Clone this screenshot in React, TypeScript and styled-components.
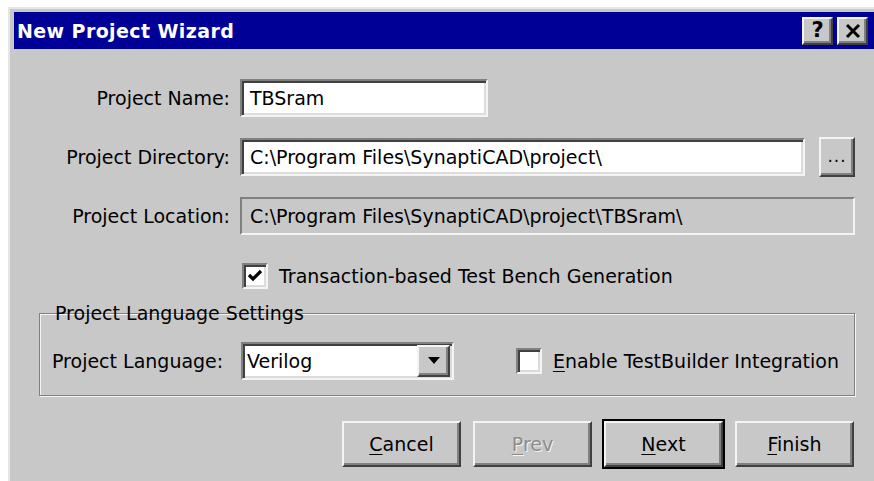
import React from "react";
import styled, { createGlobalStyle } from "styled-components";

const FONT = `"DejaVu Sans", "Liberation Sans", sans-serif`;
const FACE = "#c8c8c8";

const GlobalStyle = createGlobalStyle`
  html, body { margin: 0; padding: 0; background: #ffffff; overflow: hidden; }
  body { font-family: ${FONT}; }
  * { box-sizing: border-box; }
`;

const Window = styled.div`
  margin: 7px 0 0 8px;
  height: calc(100vh - 7px);
  border-top: 2px solid #e6e6e6;
  border-left: 2px solid #e6e6e6;
  background: ${FACE};
  padding: 3px 0 0 4px;
  display: flex;
  flex-direction: column;
  font-family: ${FONT};
  font-size: 19px;
  color: #000;
`;

const TitleBar = styled.div`
  height: 37px;
  background: #000096;
  display: flex;
  align-items: center;
  padding: 0 6px 0 3px;
`;

const Title = styled.div`
  flex: 1;
  color: #fff;
  font-weight: bold;
  font-size: 19px;
  letter-spacing: 0.4px;
`;

const CaptionButton = styled.div`
  width: 31px;
  height: 28px;
  margin-left: 4px;
  background: ${FACE};
  border-top: 2px solid #f4f4f4;
  border-left: 2px solid #f4f4f4;
  border-right: 2px solid #404040;
  border-bottom: 2px solid #404040;
  box-shadow: inset -2px -2px 0 #808080;
  display: flex;
  align-items: center;
  justify-content: center;
`;

const Body = styled.div`
  flex: 1;
  padding: 30px 0 0 0;
  display: flex;
  flex-direction: column;
`;

const FormGrid = styled.div`
  display: grid;
  grid-template-columns: 216px 1fr;
  column-gap: 10px;
  row-gap: 20px;
  align-items: center;
  padding-right: 19px;
`;

const Label = styled.label`
  text-align: right;
  white-space: nowrap;
`;

const FieldRow = styled.div`
  display: flex;
  align-items: center;
  gap: 14px;
`;

const TextField = styled.div<{ $width?: number; $disabled?: boolean }>`
  ${(p) => (p.$width ? `width: ${p.$width}px;` : "flex: 1;")}
  height: 38px;
  background: ${(p) => (p.$disabled ? FACE : "#ffffff")};
  border-top: 2px solid #808080;
  border-left: 2px solid #808080;
  border-right: 2px solid #f4f4f4;
  border-bottom: 2px solid #f4f4f4;
  box-shadow: ${(p) =>
    p.$disabled ? "none" : "inset 2px 2px 0 #404040, inset -2px -2px 0 #dcdcdc"};
  padding: 0 8px;
  display: flex;
  align-items: center;
  white-space: nowrap;
  overflow: hidden;
`;

const BrowseButton = styled.div`
  width: 36px;
  height: 40px;
  background: ${FACE};
  border-top: 2px solid #f4f4f4;
  border-left: 2px solid #f4f4f4;
  border-right: 2px solid #404040;
  border-bottom: 2px solid #404040;
  box-shadow: inset -2px -2px 0 #808080;
  display: flex;
  align-items: flex-end;
  justify-content: center;
  padding-bottom: 9px;
  font-size: 17px;
  letter-spacing: 1px;
`;

const CheckRow = styled.div<{ $indent: number }>`
  display: flex;
  align-items: center;
  gap: 11px;
  padding-left: ${(p) => p.$indent}px;
`;

const CheckBox = styled.div`
  width: 26px;
  height: 26px;
  background: #ffffff;
  border-top: 2px solid #808080;
  border-left: 2px solid #808080;
  border-right: 2px solid #f4f4f4;
  border-bottom: 2px solid #f4f4f4;
  box-shadow: inset 2px 2px 0 #404040, inset -2px -2px 0 #dcdcdc;
  display: flex;
  align-items: center;
  justify-content: center;
`;

const Group = styled.fieldset`
  margin: 14px 19px 0 25px;
  padding: 10px 10px 0 10px;
  height: 93px;
  border: 0;
  box-shadow: inset 1px 1px 0 #808080, inset -1px -1px 0 #808080,
    1px 1px 0 #f4f4f4, inset 2px 2px 0 #f4f4f4;
  display: flex;
  align-items: flex-start;
`;

const Legend = styled.legend`
  padding: 0 4px 0 2px;
  margin-left: 4px;
  line-height: 20px;
`;

const GroupRow = styled.div`
  display: flex;
  align-items: center;
  width: 100%;
  margin-top: 9px;
`;

const GroupLabel = styled.span`
  width: 192px;
  padding-left: 3px;
  white-space: nowrap;
`;

const Select = styled.div`
  width: 213px;
  height: 38px;
  background: #ffffff;
  border-top: 2px solid #808080;
  border-left: 2px solid #808080;
  border-right: 2px solid #f4f4f4;
  border-bottom: 2px solid #f4f4f4;
  box-shadow: inset 2px 2px 0 #404040, inset -2px -2px 0 #dcdcdc;
  display: flex;
  align-items: center;
  padding: 2px 2px 2px 4px;
`;

const SelectValue = styled.span`
  flex: 1;
`;

const DropButton = styled.div`
  width: 33px;
  height: 32px;
  background: ${FACE};
  border-top: 2px solid #f4f4f4;
  border-left: 2px solid #f4f4f4;
  border-right: 2px solid #404040;
  border-bottom: 2px solid #404040;
  box-shadow: inset -2px -2px 0 #808080;
  display: flex;
  align-items: center;
  justify-content: center;
`;

const Spacer = styled.div`
  flex: 1;
`;

const ButtonBar = styled.div`
  display: flex;
  justify-content: flex-end;
  gap: 12px;
  padding: 0 20px 0 0;
  margin-top: 25px;
`;

const PushButton = styled.div<{ $default?: boolean; $disabled?: boolean }>`
  width: 119px;
  height: 46px;
  background: ${FACE};
  border-top: 2px solid #f4f4f4;
  border-left: 2px solid #f4f4f4;
  border-right: 2px solid #404040;
  border-bottom: 2px solid #404040;
  box-shadow: inset -2px -2px 0 #808080
    ${(p) => (p.$default ? ", 0 0 0 2px #000" : "")};
  display: flex;
  align-items: center;
  justify-content: center;
  color: ${(p) => (p.$disabled ? "#8c8c8c" : "#000")};
  text-shadow: ${(p) => (p.$disabled ? "1px 1px 0 #f4f4f4" : "none")};
`;

const Key = styled.span`
  text-decoration: underline;
  text-underline-offset: 3px;
`;

const CheckMark = () => (
  <svg width="16" height="16" viewBox="0 0 16 16">
    <path d="M2 7 L6 11 L14 3" fill="none" stroke="#000" strokeWidth="3.2" />
  </svg>
);

const Arrow = () => (
  <svg width="12" height="8" viewBox="0 0 12 8">
    <path d="M0 0 H12 L6 7 Z" fill="#000" />
  </svg>
);

const HelpGlyph = styled.span`
  font-weight: bold;
  font-size: 21px;
  line-height: 1;
`;

const CloseIcon = () => (
  <svg width="16" height="16" viewBox="0 0 16 16">
    <path d="M2 2 L14 14 M14 2 L2 14" stroke="#000" strokeWidth="3" />
  </svg>
);

export default function App() {
  return (
    <>
      <GlobalStyle />
      <Window>
        <TitleBar>
          <Title>New Project Wizard</Title>
          <CaptionButton>
            <HelpGlyph>?</HelpGlyph>
          </CaptionButton>
          <CaptionButton>
            <CloseIcon />
          </CaptionButton>
        </TitleBar>
        <Body>
          <FormGrid>
            <Label>Project Name:</Label>
            <FieldRow>
              <TextField $width={248}>TBSram</TextField>
            </FieldRow>
            <Label>Project Directory:</Label>
            <FieldRow>
              <TextField>C:\Program Files\SynaptiCAD\project\</TextField>
              <BrowseButton>...</BrowseButton>
            </FieldRow>
            <Label>Project Location:</Label>
            <FieldRow>
              <TextField $disabled>C:\Program Files\SynaptiCAD\project\TBSram\</TextField>
            </FieldRow>
          </FormGrid>
          <CheckRow $indent={228} style={{ marginTop: 28 }}>
            <CheckBox>
              <CheckMark />
            </CheckBox>
            <span>Transaction-based Test Bench Generation</span>
          </CheckRow>
          <Group>
            <Legend>Project Language Settings</Legend>
            <GroupRow>
              <GroupLabel>Project Language:</GroupLabel>
              <Select>
                <SelectValue>Verilog</SelectValue>
                <DropButton>
                  <Arrow />
                </DropButton>
              </Select>
              <Spacer />
              <CheckRow $indent={0} style={{ paddingRight: 6 }}>
                <CheckBox />
                <span>
                  <Key>E</Key>nable TestBuilder Integration
                </span>
              </CheckRow>
            </GroupRow>
          </Group>
          <ButtonBar>
            <PushButton>
              <span>
                <Key>C</Key>ancel
              </span>
            </PushButton>
            <PushButton $disabled>
              <span>
                <Key>P</Key>rev
              </span>
            </PushButton>
            <PushButton $default>
              <span>
                <Key>N</Key>ext
              </span>
            </PushButton>
            <PushButton>
              <span>
                <Key>F</Key>inish
              </span>
            </PushButton>
          </ButtonBar>
        </Body>
      </Window>
    </>
  );
}
